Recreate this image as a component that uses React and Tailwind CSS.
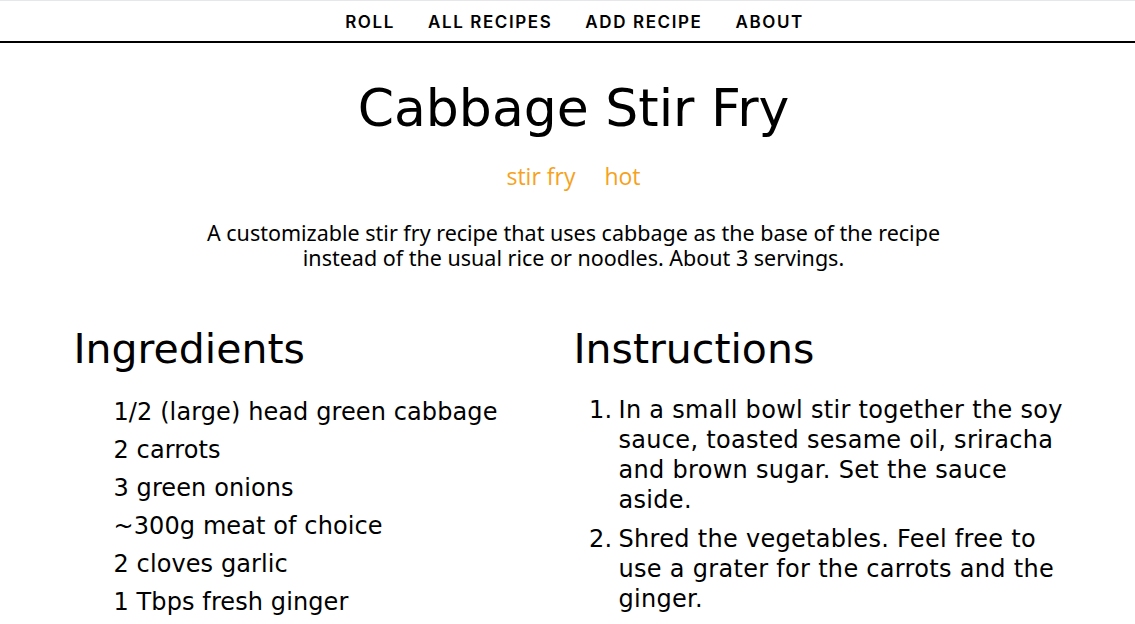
export default function App() {
  const ingredients = [
    '1/2 (large) head green cabbage',
    '2 carrots',
    '3 green onions',
    '~300g meat of choice',
    '2 cloves garlic',
    '1 Tbps fresh ginger',
  ]
  const steps = [
    'In a small bowl stir together the soy sauce, toasted sesame oil, sriracha and brown sugar. Set the sauce aside.',
    'Shred the vegetables. Feel free to use a grater for the carrots and the ginger.',
  ]
  const font = { fontFamily: '"DejaVu Sans", sans-serif' }
  return (
    <div className="min-h-screen bg-white text-black" style={font}>
      <nav
        className="flex h-[43px] items-center justify-center gap-[33px] border-t border-t-gray-200 border-b-2 border-b-black pl-[14px] pt-[4px] text-[17px] font-semibold tracking-[1.6px]"
        style={{ fontFamily: 'Inter, sans-serif' }}
      >
        <a>ROLL</a>
        <a>ALL RECIPES</a>
        <a>ADD RECIPE</a>
        <a>ABOUT</a>
      </nav>
      <main className="mx-auto w-[1000px]">
        <header className="pl-[12px]">
          <h1 className="mt-[34px] text-center text-[52px] leading-[62px]">Cabbage Stir Fry</h1>
          <div
            className="mt-[20px] flex justify-center gap-[29px] text-[23px] text-[#f6a21d]"
            style={{ fontFamily: '"Open Sans", sans-serif' }}
          >
            <span>stir fry</span>
            <span>hot</span>
          </div>
          <p
            className="mx-auto mt-[26px] w-[760px] text-center text-[21.5px] leading-[25px]"
            style={{ fontFamily: '"Noto Sans", sans-serif' }}
          >
            A customizable stir fry recipe that uses cabbage as the base of the recipe instead of the usual rice or noodles. About 3 servings.
          </p>
        </header>
        <div className="mt-[54px] grid grid-cols-2">
          <section className="pl-[6px]">
            <h2 className="text-[41px] leading-[50px]">Ingredients</h2>
            <ul className="mt-[19px] pl-[40px] text-[24px] tracking-[0.1px]">
              {ingredients.map((t) => (
                <li key={t} className="leading-[38px]">{t}</li>
              ))}
            </ul>
          </section>
          <section className="pl-[6px]">
            <h2 className="text-[41px] leading-[50px]">Instructions</h2>
            <ol className="mt-[21px] text-[24px] leading-[30px] tracking-[0.3px]">
              {steps.map((t, i) => (
                <li key={t} className="mb-[9px] flex">
                  <span className="w-[45px] shrink-0 pr-[6px] text-right">{i + 1}.</span>
                  <span>{t}</span>
                </li>
              ))}
            </ol>
          </section>
        </div>
      </main>
    </div>
  )
}
